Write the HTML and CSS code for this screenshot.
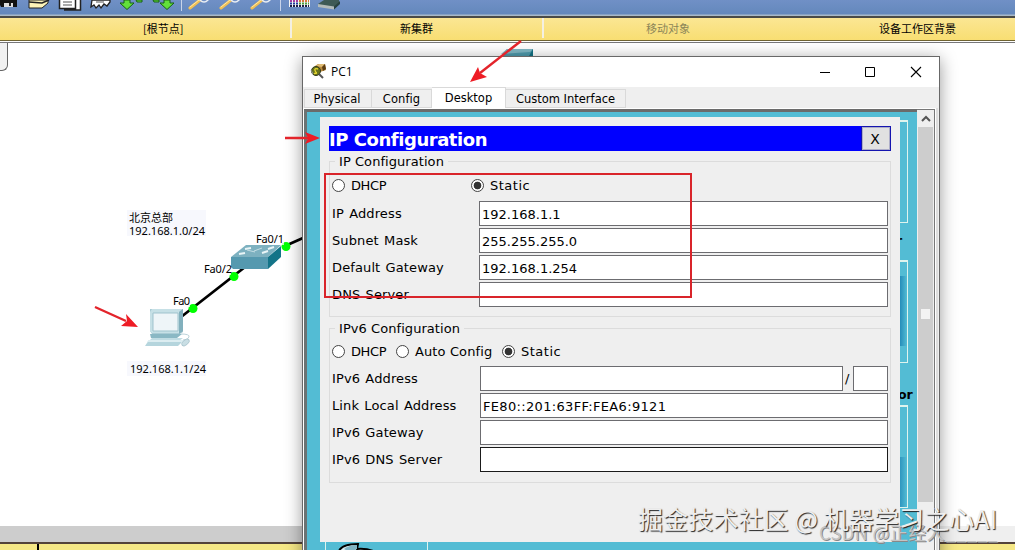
FILE: index.html
```html
<!DOCTYPE html>
<html lang="zh-CN">
<head>
    <meta charset="UTF-8">
    <title>PC1</title>
    <link rel="stylesheet" href="styles.css">
</head>
<body>
<div class="app">
    <div class="toolbar">
        <svg width="345" height="16" viewBox="0 0 345 16">
            <!-- save -->
            <path d="M0 0H17V7H1L0 5Z" fill="#111"/>
            <path d="M4 3H13V7H4Z" fill="#ddd"/>
            <path d="M9 3H11V6H9Z" fill="#222"/>
            <!-- print -->
            <path d="M29 0H48V3L42 8H29Z" fill="#fdf4b8" stroke="#222"/>
            <path d="M29 2L42 3L49 0" fill="none" stroke="#222" stroke-width="1.5"/>
            <!-- copy -->
            <path d="M65 0H80V10H65Z" fill="#fff"/>
            <path d="M59.500 0V8.500H75.500V0M64 10H80.500V0" fill="#fff" stroke="#222" stroke-width="1.500"/>
            <path d="M63 2H72M63 5H72" stroke="#555"/>
            <!-- paste -->
            <path d="M92 0L91 7L94 5L96 8L99 5L101 8L104 4L107 6L110 2V0Z" fill="#fff" stroke="#222" stroke-width="1.300"/>
            <path d="M96 2H104" stroke="#555"/>
            <!-- undo, redo -->
            <path d="M124 0V3H120L127 9.500L134 3H130V0Z" fill="#62e03a" stroke="#175f16"/>
            <path d="M136 0H142V2H137Z" fill="#62e03a" stroke="#175f16"/>
            <path d="M164 0V3H160L167 9.500L174 3H170V0Z" fill="#62e03a" stroke="#175f16"/>
            <path d="M153 0H159V2H154Z" fill="#62e03a" stroke="#175f16"/>
            <path d="M181.500 0V11M280.500 0V11" stroke="#c8d4ea"/>
            <!-- zoom in, reset, out -->
            <g fill="none" stroke-linecap="round">
                <path d="M190 8L200 0M221 8L231 0M252 8L262 0" stroke="#f2c053" stroke-width="3"/>
                <path d="M190 7L199 0M221 7L230 0M252 7L261 0" stroke="#ffe9a6"/>
                <path d="M200 0Q204 4 208 0M231 0Q235 4 239 0M262 0Q266 4 270 0" stroke="#e9eef5" stroke-width="1.500"/>
            </g>
            <!-- palette -->
            <path d="M289 0H310V7H289Z" fill="#f4f4f4"/>
            <g stroke-width="2" stroke-dasharray="2 1">
                <path d="M290 1H298" stroke="#a33a9e"/>
                <path d="M299 1H309" stroke="#d9763a"/>
                <path d="M290 3.500H298" stroke="#223a9e"/>
                <path d="M299 3.500H309" stroke="#4d9e3a"/>
                <path d="M290 6H309" stroke="#1c1c44"/>
            </g>
            <!-- custom devices -->
            <path d="M318 4L324 0H339V4L334 9L318 6Z" fill="#3e5a55"/>
            <path d="M318 4L334 6.500V9.500L318 7Z" fill="#b4bcb9"/>
            <path d="M334 9.500L340 4V1L334 6.500Z" fill="#28423f"/>
        </svg>
    </div>
    <div class="band">
        <span class="band-item root">[根节点]</span>
        <span class="band-item cluster">新集群</span>
        <span class="band-item move">移动对象</span>
        <span class="band-item background">设备工作区背景</span>
    </div>
    <div class="workspace">
        <div class="corner"></div>
    </div>
    <div class="scroll-h"><span></span></div>
    <div class="bottom-band"><span></span></div>

    <!-- topology -->
    <svg class="topology" width="1015" height="550" viewBox="0 0 1015 550">
        <path d="M501 56L507 49H533V56Z" fill="#4e9bad"/>
        <path d="M501 54L507 49H533L530 52Z" fill="#7fb7c4"/>
        <path d="M529 56L533 49V56Z" fill="#127284"/>
        <path d="M127 210H206V236H127Z" fill="#f7f8fd"/>
        <path d="M127 361H206V376H127Z" fill="#f7f8fd"/>
        <path d="M181 317L245 267M285 246L303 238" stroke="#000" stroke-width="2.800"/>
        <!-- switch -->
        <path d="M231 257L246 245H281L268 257Z" fill="#7db1c0"/>
        <path d="M231 257H268V269H233L231 267Z" fill="#5599af"/>
        <path d="M268 257L281 246V257L268 269Z" fill="#137488"/>
        <path d="M245 249L251 248M239 254L245 253M268 249L274 247M262 253L268 251" stroke="#e9f5f7" stroke-width="2"/>
        <path d="M247 250L255 252M262 248L254 251" stroke="#c3dde4" stroke-width="1"/>
        <g fill="#0f0">
            <circle cx="286" cy="246.500" r="4.500"/>
            <circle cx="234" cy="276.500" r="4.500"/>
            <circle cx="193" cy="308.500" r="4.500"/>
        </g>
        <path d="M254 233H284V245H254ZM203 263H231V275H203ZM172 295H190V307H172Z" fill="#fff" fill-opacity=".7"/>
        <!-- pc -->
        <path d="M150 309H183V332L180 334H152L150 331Z" fill="#a9cbd4"/>
        <path d="M150 312L152 309H183L179 312V333H152L150 331Z" fill="#c6e0e6"/>
        <path d="M153 313H178V331H153Z" fill="#eef5f8" stroke="#9fc3cd"/>
        <path d="M183 309L179 312V334L183 331Z" fill="#82b0bd"/>
        <path d="M150 334H182L177 338H151Z" fill="#8ab8c4"/>
        <path d="M152 338H183L179 341H149Z" fill="#c0dce3"/>
        <path d="M149 340H184L178 346H145Z" fill="#b5d5dd"/>
        <path d="M149 340H184L182 342H147Z" fill="#dcedf1"/>
        <path d="M181 334Q190 334 189 337T183 340" fill="none" stroke="#bcd3da"/>
        <ellipse cx="185.500" cy="342.500" rx="4.500" ry="2.500" transform="rotate(-40 185.500 342.500)" fill="#c9dee4" stroke="#9dbcc5" stroke-width=".6"/>
        <g class="labels">
            <text x="129" y="222" textLength="44">北京总部</text>
            <text x="129" y="235" textLength="76">192.168.1.0/24</text>
            <text x="130" y="373" textLength="76">192.168.1.1/24</text>
            <text x="256" y="243" textLength="28">Fa0/1</text>
            <text x="204" y="273" textLength="28">Fa0/2</text>
            <text x="173" y="305" textLength="17">Fa0</text>
        </g>
    </svg>

    <div class="window">
        <div class="title-bar">
            <svg width="18" height="18" viewBox="0 0 18 18">
                <path d="M5 3L8 1H15L16 7L10 9Z" fill="#b98a3e"/>
                <path d="M6 3L9 1H15L12 4Z" fill="#dfbb73"/>
                <path d="M12 4L15 1L16 6L13 8Z" fill="#5c3d13"/>
                <circle cx="6" cy="8" r="4.500" fill="#69731d" stroke="#333a18"/>
                <path d="M8 6Q4 5 5 7.500T7 10L4 10.500" fill="none" stroke="#e9d92f" stroke-width="1.300"/>
                <path d="M9 11L13 15" stroke="#555" stroke-width="2"/>
                <path d="M1 7L3 11" stroke="#9a9a9a"/>
            </svg>
            <span class="title">PC1</span>
            <svg class="controls" width="104" height="12" viewBox="0 0 104 12">
                <path d="M0 6.500H10" stroke="#000"/>
                <path d="M45.500 1.500H54.500V10.500H45.500Z" fill="none" stroke="#000"/>
                <path d="M91 1L101 11M101 1L91 11" stroke="#000" stroke-width="1.100"/>
            </svg>
        </div>
        <div class="tabs">
            <div class="tab physical">Physical</div>
            <div class="tab config">Config</div>
            <div class="tab desktop active">Desktop</div>
            <div class="tab custom">Custom Interface</div>
        </div>
        <div class="pane">
            <div class="desktop-area">
                <div class="tile tile-1"></div>
                <div class="tile tile-2"></div>
                <div class="tile tile-3"></div>
                <div class="tile tile-4">
                    <svg width="60" height="10" viewBox="0 0 60 10">
                        <path d="M13 8Q16 1 32 1L31 6Q42 5 52 10H16Z" fill="#dfeff2" stroke="#000" stroke-width="2"/>
                        <path d="M18 6Q23 2 31 2V6L24 9Z" fill="#7fb4c3"/>
                    </svg>
                </div>
                <span class="tile-label label-1">r</span>
                <span class="tile-label label-2">or</span>
                <div class="dialog">
                    <div class="dialog-head">
                        <span>IP Configuration</span>
                        <button class="close">X</button>
                    </div>
                    <div class="group ipv4">
                        <span class="legend">IP Configuration</span>
                        <div class="radios">
                            <label class="radio dhcp"><i></i>DHCP</label>
                            <label class="radio static"><i class="on"></i>Static</label>
                        </div>
                        <div class="row"><label>IP Address</label><input value="192.168.1.1"></div>
                        <div class="row"><label>Subnet Mask</label><input value="255.255.255.0"></div>
                        <div class="row"><label>Default Gateway</label><input value="192.168.1.254"></div>
                        <div class="row"><label>DNS Server</label><input></div>
                    </div>
                    <div class="group ipv6">
                        <span class="legend">IPv6 Configuration</span>
                        <div class="radios">
                            <label class="radio dhcp"><i></i>DHCP</label>
                            <label class="radio auto"><i></i>Auto Config</label>
                            <label class="radio static"><i class="on"></i>Static</label>
                        </div>
                        <div class="row"><label>IPv6 Address</label><input><span class="slash">/</span><input class="prefix"></div>
                        <div class="row"><label>Link Local Address</label><input class="link-local" value="FE80::201:63FF:FEA6:9121"></div>
                        <div class="row"><label>IPv6 Gateway</label><input></div>
                        <div class="row"><label>IPv6 DNS Server</label><input class="dark"></div>
                    </div>
                </div>
            </div>
            <div class="scroll-v">
                <svg width="16" height="16" viewBox="0 0 16 16"><path d="M4 10L8 6L12 10" fill="none" stroke="#555" stroke-width="2"/></svg>
                <div class="track"><span></span></div>
            </div>
        </div>
    </div>

    <!-- annotations -->
    <svg class="marks" width="1015" height="550" viewBox="0 0 1015 550">
        <path d="M325 174H691V297H325Z" fill="none" stroke="#d9242a" stroke-width="2"/>
        <g stroke="#e3242b" stroke-width="2.400">
            <path d="M521 41L480 73M285 138H308M95 307L126 321"/>
        </g>
        <g fill="#ee1c25">
            <path d="M470 82L478 67L480 73L487 77Z"/>
            <path d="M320 138L305 132L308 138L305 144Z"/>
            <path d="M138 327L126 314L127 321L121 326Z"/>
        </g>
    </svg>
    <div class="watermark csdn">CSDN @正经人_____</div>
    <div class="watermark juejin">掘金技术社区 @ 机器学习之心AI</div>
</div>
</body>
</html>
```
FILE: styles.css
```css
* {
    box-sizing: border-box;
}

body {
    margin: 0;
    font-family: "DejaVu Sans", "Noto Sans CJK SC", sans-serif;
    font-size: 13px;
    color: #000;
}

.app {
    position: relative;
    display: flex;
    flex-direction: column;
    width: 1015px;
    height: 550px;
    overflow: hidden;
    background: #fff;
}

.toolbar {
    height: 16px;
    background: linear-gradient(#7090c6, #6488bc 14px, #a9b9c8 15px);
}

.toolbar svg {
    display: block;
}

.band {
    display: flex;
    height: 27px;
    border-top: 2px solid #4a4b48;
    border-bottom: 1px solid #77777a;
    background: linear-gradient(#fbe693, #f8de72 22px, #6f6332 22px, #6f6332 23px, #fff 23px);
    font-family: "Noto Sans CJK SC", sans-serif;
    font-size: 11px;
    line-height: 20px;
}

.band-item {
    white-space: nowrap;
}

.root {
    width: 292px;
    height: 20px;
    padding-left: 143px;
    border-right: 2px solid #f4f0e2;
}

.cluster {
    width: 252px;
    height: 20px;
    padding-left: 108px;
    border-right: 2px solid #f4f0e2;
}

.move {
    width: 335px;
    padding-left: 102px;
    color: #8b8558;
}

.workspace {
    flex: 1;
}

.corner {
    width: 8px;
    height: 28px;
    border: 1px solid #666;
    border-width: 0 1px 1px 0;
    border-bottom-right-radius: 6px;
    background: #f1f1f1;
}

.scroll-h {
    display: flex;
    height: 16px;
    background: #efefef;
}

.scroll-h span {
    width: 900px;
    background: #cdcdcd;
}

.bottom-band {
    height: 8px;
    border-top: 2px solid #54433a;
    background: #f6e886;
}

.bottom-band span {
    display: block;
    width: 2px;
    height: 6px;
    margin-left: 37px;
    background: #000;
}

.topology, .marks {
    position: absolute;
    left: 0;
    top: 0;
}

.labels {
    font-family: "Noto Sans", "Noto Sans CJK SC", sans-serif;
    font-size: 11px;
}

.window {
    position: absolute;
    left: 302px;
    top: 56px;
    width: 638px;
    height: 520px;
    display: flex;
    flex-direction: column;
    border: 1px solid #686868;
    background: #efefef;
    box-shadow: 0 3px 16px rgba(0, 0, 0, .4);
}

.title-bar {
    display: flex;
    align-items: center;
    height: 30px;
    padding-left: 7px;
    background: #fff;
}

.title {
    margin-left: 3px;
    font-family: "Open Sans", sans-serif;
    font-size: 12px;
    line-height: 16px;
    padding-bottom: 1px;
}

.controls {
    margin: 0 15px 1px auto;
}

.tabs {
    display: flex;
    align-items: flex-end;
    height: 21px;
    padding-left: 1px;
    font-size: 11.500px;
    line-height: 19px;
}

.tab {
    height: 19px;
    border: 1px solid #d9d9d9;
    border-left-width: 0;
    text-align: center;
}

.tab.active {
    height: 21px;
    border-bottom: 0;
    background: #fff;
    line-height: 20px;
}

.physical {
    width: 68px;
    padding-right: 2px;
    border-left-width: 1px;
}

.config {
    width: 60px;
    letter-spacing: .1px;
}

.desktop {
    width: 74px;
}

.custom {
    width: 120px;
}

.pane {
    display: flex;
    flex: 1;
    margin-right: 1px;
    padding-top: 1px;
    border-left: 1px solid #fff;
    border-right: 2px solid #ddd;
    background: #fff;
}

.desktop-area {
    position: relative;
    width: 613px;
    border-top: 3px solid #6b6b6b;
    border-left: 3px solid #6b7373;
    background: #53bcd4;
}

/* desktop tiles, mostly hidden behind the dialog */
.tile {
    position: absolute;
    left: 501px;
    width: 100px;
    height: 103px;
    border: 1px solid #dff4ee;
    border-top-width: 2px;
}

.tile-1 {
    top: 8px;
}

.tile-2 {
    top: 148px;
    background: linear-gradient(90deg, #1f86b6 90px, #53bcd4 98px) 0 14px / 100% 70px no-repeat;
}

.tile-3 {
    top: 293px;
    background: linear-gradient(90deg, #1f86b6 88px, #53bcd4 98px) 0 50px / 100% 50px no-repeat;
}

.tile-4 {
    left: 18px;
    top: 427px;
    width: 103px;
}

.tile-label {
    position: absolute;
    font-size: 12.500px;
    font-weight: bold;
    line-height: 14px;
}

.label-1 {
    left: 589px;
    top: 122px;
}

.label-2 {
    left: 591px;
    top: 276px;
}

.dialog {
    position: relative;
    width: 580px;
    height: 425px;
    margin: 5px 0 0 13px;
    padding: 9px 9px 0;
    background: #efefef;
}

.dialog-head {
    display: flex;
    justify-content: space-between;
    height: 25px;
    background: #00f;
    color: #fff;
    font-size: 18px;
    font-weight: bold;
    line-height: 27px;
}

.dialog-head span {
    letter-spacing: -.45px;
}

.close {
    width: 30px;
    height: 25px;
    padding: 0 2px 0 0;
    border: 1px solid #1515b0;
    background: #e1e1e1;
    box-shadow: inset 0 0 0 1px #adadc8;
    font-family: "DejaVu Sans", sans-serif;
    font-size: 14px;
}

.group {
    display: flex;
    flex-direction: column;
    padding: 0 2px;
    border: 1px solid #dcdcdc;
    letter-spacing: .12px;
}

.ipv4 {
    height: 156px;
    margin-top: 10px;
}

.ipv6 {
    height: 155px;
    margin-top: 11px;
}

.legend {
    align-self: flex-start;
    height: 16px;
    margin: -9px 0 0 3px;
    padding: 0 4px;
    background: #efefef;
    line-height: 18px;
    letter-spacing: .06px;
}

.radios {
    display: flex;
    height: 32px;
    align-items: center;
}

.ipv6 .radios {
    height: 30px;
}

.radio {
    display: flex;
    align-items: center;
    gap: 6px;
}

.dhcp {
    width: 139px;
    letter-spacing: -.4px;
}

.ipv6 .dhcp {
    width: 64px;
}

.auto {
    width: 106px;
}

.static {
    letter-spacing: .5px;
}

.radio i {
    width: 13px;
    height: 13px;
    border: 1px solid #444;
    border-radius: 50%;
    background: #fff;
}

.radio .on {
    background: radial-gradient(circle, #333 3.500px, #fff 4.200px);
}

.row {
    display: flex;
    height: 27px;
}

.row label {
    width: 147px;
    line-height: 25px;
    word-spacing: 1px;
}

.ipv6 .row label {
    width: 148px;
}

.row input {
    flex: 1;
    min-width: 0;
    height: 25px;
    padding: 1px 2px 0;
    border: 1px solid #6c6c70;
    background: #fff;
    font-family: inherit;
    font-size: 13px;
}

.row .prefix {
    flex: none;
    width: 35px;
}

.row .link-local {
    letter-spacing: .33px;
}

.row .dark {
    border-color: #1a1a1a;
}

.slash {
    width: 10px;
    padding-left: 2px;
    line-height: 25px;
}

.scroll-v {
    display: flex;
    flex-direction: column;
    width: 18px;
    padding: 1px 1px 0 1px;
    border-top: 1px solid #777;
    border-right: 1px solid #777;
    background: #efefef;
}

.track {
    height: 375px;
    padding: 182px 0 0 3px;
    background: #cdcdcd;
}

.track span {
    display: block;
    width: 9px;
    height: 10px;
    background: #f3f3f3;
}

.watermark {
    position: absolute;
    white-space: nowrap;
    font-family: "Noto Sans CJK SC", sans-serif;
    line-height: 1;
}

.csdn {
    left: 819px;
    top: 523px;
    font-size: 18px;
    letter-spacing: .45px;
    color: #c4c4c4;
    text-shadow: 1px 1px 0 #888;
}

.juejin {
    left: 638px;
    top: 506px;
    font-size: 25px;
    letter-spacing: .1px;
    color: #eee;
    text-shadow: 1px 1px 1px #222;
}
```
